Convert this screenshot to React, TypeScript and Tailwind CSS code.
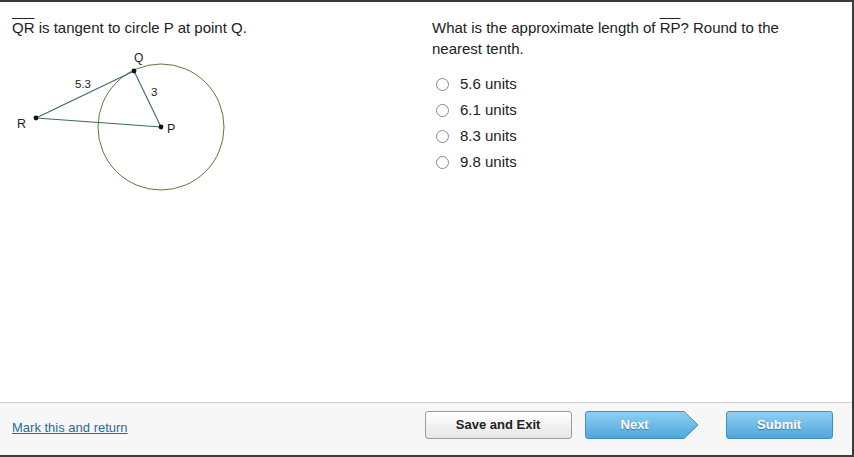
import { useState } from "react";

const options = ["5.6 units", "6.1 units", "8.3 units", "9.8 units"];

function Diagram() {
  // page coordinates offset by svg top (y=40)
  const oy = 40;
  const Q = { x: 134, y: 71 - oy };
  const R = { x: 36, y: 118 - oy };
  const P = { x: 161, y: 127 - oy };
  return (
    <svg width="260" height="160" viewBox="0 0 260 160" className="block">
      <circle cx={P.x} cy={P.y} r="63" fill="none" stroke="#5f7a3a" strokeWidth="1" />
      <line x1={R.x} y1={R.y} x2={Q.x} y2={Q.y} stroke="#3d6672" strokeWidth="1.1" />
      <line x1={Q.x} y1={Q.y} x2={P.x} y2={P.y} stroke="#3d6672" strokeWidth="1.1" />
      <line x1={R.x} y1={R.y} x2={P.x} y2={P.y} stroke="#3d6672" strokeWidth="1.1" />
      <circle cx={Q.x} cy={Q.y} r="2.4" fill="#111" />
      <circle cx={R.x} cy={R.y} r="2.4" fill="#111" />
      <circle cx={P.x} cy={P.y} r="2.4" fill="#111" />
      <g fontFamily="'Liberation Sans', Arial, sans-serif" fill="#222">
        <text x="134" y={62 - oy} fontSize="12">Q</text>
        <text x="75" y={88 - oy} fontSize="11.5">5.3</text>
        <text x="151" y={96 - oy} fontSize="11.5">3</text>
        <text x="17" y={128 - oy} fontSize="12.5">R</text>
        <text x="167" y={133 - oy} fontSize="12.5">P</text>
      </g>
    </svg>
  );
}

function Radio({ label, checked, onClick }: { label: string; checked: boolean; onClick: () => void }) {
  return (
    <label className="flex items-center h-[26px] cursor-pointer" onClick={onClick}>
      <span className="w-[13px] h-[13px] rounded-full border border-[#8a8a8a] bg-white flex items-center justify-center ml-[4px]">
        {checked && <span className="w-[5px] h-[5px] rounded-full bg-[#333]" />}
      </span>
      <span className="ml-[11px] text-[15px] text-[#222]">{label}</span>
    </label>
  );
}

export default function App() {
  const [picked, setPicked] = useState<number | null>(null);

  return (
    <div className="w-[854px] h-[457px] bg-[#3c3c3c] font-['Liberation_Sans',Arial,sans-serif] overflow-hidden">
      <div className="w-[852px] h-[453px] mt-[2px] bg-white flex flex-col">
        <div className="flex-1 flex">
          <div className="w-[420px] pt-[15px]">
            <p className="pl-[12px] text-[15px] leading-[21px] text-[#222]">
              <span className="overline">QR</span> is tangent to circle P at point Q.
            </p>
            <div className="mt-[2px]">
              <Diagram />
            </div>
          </div>
          <div className="pl-[12px] pt-[15px] w-[420px]">
            <p className="text-[15px] leading-[21px] text-[#222] w-[380px]">
              What is the approximate length of <span className="overline">RP</span>? Round to the nearest tenth.
            </p>
            <div className="mt-[12px]">
              {options.map((o, i) => (
                <Radio key={o} label={o} checked={picked === i} onClick={() => setPicked(i)} />
              ))}
            </div>
          </div>
        </div>
        <div className="h-[53px] border-t border-[#cfcfcf] bg-[#f7f7f7] flex items-start">
          <a href="#" className="ml-[12px] mt-[17px] text-[13px] leading-[16px] text-[#1d6e96] underline">
            Mark this and return
          </a>
          <button className="ml-[297px] mt-[8px] w-[147px] h-[28px] rounded-[3px] border border-[#9c9c9c] bg-gradient-to-b from-white to-[#e6e6e6] text-[13px] font-bold text-[#222]">
            Save and Exit
          </button>
          <button className="relative ml-[13px] mt-[8px] w-[114px] h-[28px] text-[13px] font-bold text-white [text-shadow:0_1px_1px_rgba(0,0,0,0.35)]">
            <svg width="114" height="28" viewBox="0 0 114 28" className="absolute inset-0">
              <defs>
                <linearGradient id="nx" x1="0" y1="0" x2="0" y2="1">
                  <stop offset="0" stopColor="#8fd0f2" />
                  <stop offset="1" stopColor="#4ea6dd" />
                </linearGradient>
              </defs>
              <path d="M3 0.5 H99 L113 14 L99 27.5 H3 Q0.5 27.5 0.5 25 V3 Q0.5 0.5 3 0.5 Z" fill="url(#nx)" stroke="#3f8fc6" strokeWidth="1" />
            </svg>
            <span className="relative pr-[14px]">Next</span>
          </button>
          <button className="ml-[27px] mt-[8px] w-[107px] h-[28px] rounded-[3px] border border-[#3f8fc6] bg-gradient-to-b from-[#8fd0f2] to-[#4ea6dd] text-[13px] font-bold text-white [text-shadow:0_1px_1px_rgba(0,0,0,0.35)]">
            Submit
          </button>
        </div>
      </div>
    </div>
  );
}
